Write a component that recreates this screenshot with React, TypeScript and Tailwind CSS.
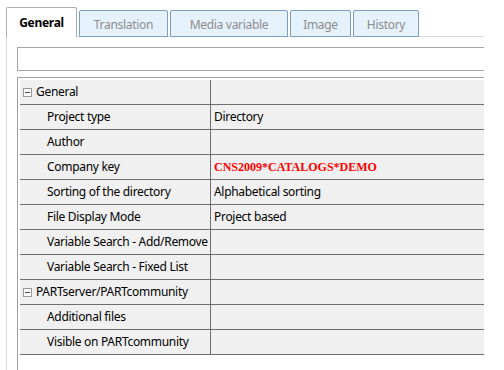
const tabs = [
  { label: "Translation", w: "w-[89px]" },
  { label: "Media variable", w: "w-[118px]" },
  { label: "Image", w: "w-[61px]" },
  { label: "History", w: "w-[66px]" },
];

type Row = { label: string; value?: string; group?: boolean; red?: boolean };

const rows: Row[] = [
  { label: "General", group: true },
  { label: "Project type", value: "Directory" },
  { label: "Author" },
  { label: "Company key", value: "CNS2009*CATALOGS*DEMO", red: true },
  { label: "Sorting of the directory", value: "Alphabetical sorting" },
  { label: "File Display Mode", value: "Project based" },
  { label: "Variable Search - Add/Remove" },
  { label: "Variable Search - Fixed List" },
  { label: "PARTserver/PARTcommunity", group: true },
  { label: "Additional files" },
  { label: "Visible on PARTcommunity" },
];

function MinusBox() {
  return (
    <svg width="9" height="9" viewBox="0 0 9 9" className="shrink-0">
      <rect x="0.5" y="0.5" width="8" height="8" fill="#fff" stroke="#9a9a9a" />
      <line x1="2" y1="4.5" x2="7" y2="4.5" stroke="#444" />
    </svg>
  );
}

function PropRow({ row }: { row: Row }) {
  return (
    <div className="flex h-[25px] border-b border-[#6e6e6e] bg-[#f0f0f0]">
      <div
        className={
          row.group
            ? "flex w-[190px] items-center gap-[4px] pl-[3px] whitespace-nowrap overflow-hidden"
            : "flex w-[190px] items-center pl-[27px] whitespace-nowrap overflow-hidden"
        }
      >
        {row.group && <MinusBox />}
        <span>{row.label}</span>
      </div>
      <div className="flex flex-1 items-center border-l border-[#6e6e6e] pl-[3px] whitespace-nowrap">
        {row.red ? (
          <span className="font-bold tracking-normal text-[#ff0000] text-[12px] [font-family:'Liberation_Serif',serif]">
            {row.value}
          </span>
        ) : (
          <span>{row.value}</span>
        )}
      </div>
    </div>
  );
}

export default function App() {
  return (
    <div className="w-[504px] h-[370px] overflow-hidden bg-white text-[12px] tracking-[-0.3px] text-black [font-family:'Noto_Sans',sans-serif]">
      {/* tab strip */}
      <div className="ml-[6px] w-[478px] pt-[7px] flex items-end border-b border-[#d9d9d9]">
        <div className="relative z-10 -mb-px flex h-[30px] w-[71px] items-center justify-center rounded-t-[2px] border border-b-0 border-[#acacac] bg-white pt-[1px] font-bold">
          General
        </div>
        {tabs.map((t) => (
          <div
            key={t.label}
            className={`-mb-px ml-[2px] flex h-[27px] ${t.w} items-center justify-center rounded-t-[2px] border border-[#7b9fbe] bg-[#e5f1fb] pt-[3px] text-[#8c8c8c]`}
          >
            {t.label}
          </div>
        ))}
      </div>

      {/* panel */}
      <div className="ml-[6px] h-[333px] border-l border-[#d9d9d9] pl-[10px] pt-[10px]">
        <div className="h-[24px] w-[467px] border border-r-0 border-[#a5a5a5]" />
        <div className="mt-[6px] h-[300px] w-[467px] border-t border-l border-[#a0a0a0] pl-[2px] pt-[2px]">
          {rows.map((r) => (
            <PropRow key={r.label} row={r} />
          ))}
        </div>
      </div>
    </div>
  );
}
